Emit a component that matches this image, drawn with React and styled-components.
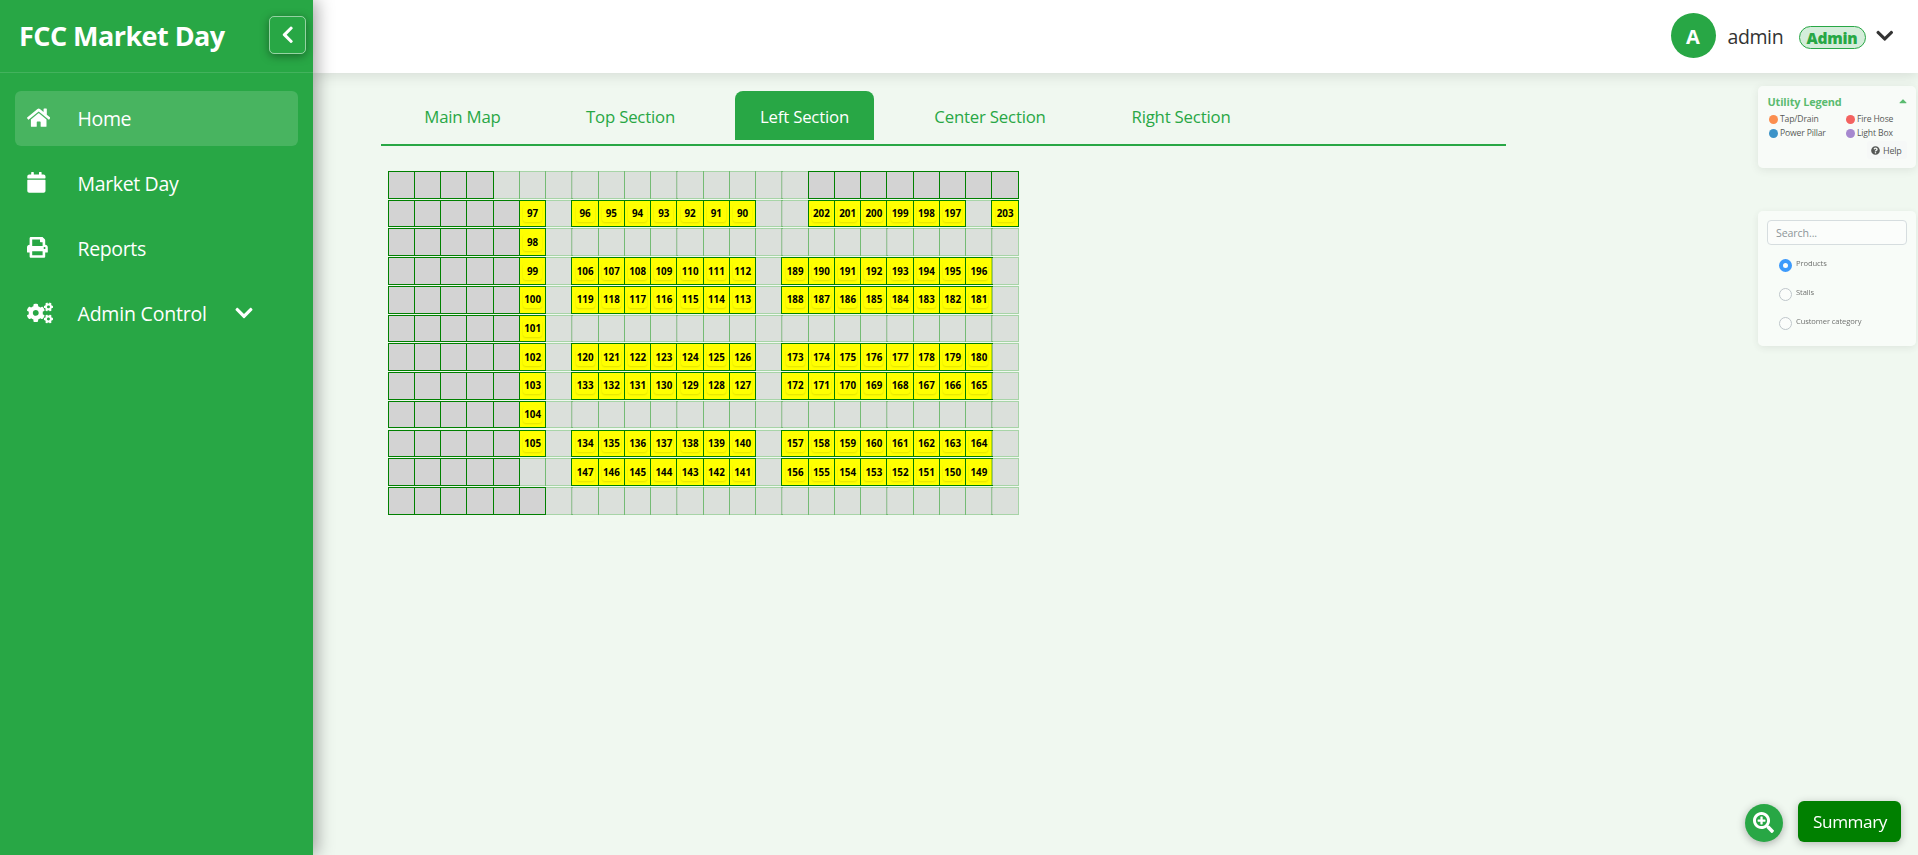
import React from 'react';
import styled, { createGlobalStyle, css } from 'styled-components';
import {
  FaHome,
  FaCalendar,
  FaPrint,
  FaCogs,
  FaChevronDown,
  FaChevronLeft,
  FaCaretUp,
  FaQuestionCircle,
  FaSearchPlus,
} from 'react-icons/fa';

const GlobalStyle = createGlobalStyle`
  *, *::before, *::after { box-sizing: border-box; }
  body {
    margin: 0;
    background: #f0f8f0;
    font-family: 'Segoe UI', 'Open Sans', 'Noto Sans', sans-serif;
    overflow: hidden;
  }
  button, input { font-family: inherit; }
`;

const Shell = styled.div`
  display: grid;
  grid-template-columns: 313px 1fr;
  height: 100vh;
  min-height: 855px;
`;

const Sidebar = styled.aside`
  position: relative;
  z-index: 3;
  background: #28a745;
  color: #fff;
  box-shadow: 4px 0 16px rgba(0, 0, 0, 0.34);
`;

const Brand = styled.div`
  display: flex;
  align-items: center;
  justify-content: space-between;
  height: 73px;
  padding: 0 7px 2px 19px;
  border-bottom: 1px solid rgba(255, 255, 255, 0.13);
`;

const BrandName = styled.h1`
  margin: 0;
  padding-top: 2px;
  font-size: 27px;
  line-height: 36px;
  font-weight: 700;
  letter-spacing: -0.55px;
  white-space: nowrap;
`;

const CollapseButton = styled.button`
  display: flex;
  align-items: center;
  justify-content: center;
  width: 37px;
  height: 38px;
  padding: 0 0 1px;
  color: #fff;
  font-size: 19.5px;
  background: transparent;
  border: 1px solid rgba(255, 255, 255, 0.5);
  border-radius: 5px;
  box-shadow: 0 2px 10px rgba(0, 0, 0, 0.38);
`;

const Nav = styled.nav`
  display: flex;
  flex-direction: column;
  gap: 10px;
  padding: 18px 15px;
`;

const NavItem = styled.a`
  display: flex;
  align-items: center;
  height: 55px;
  padding-left: 12px;
  border-radius: 6px;
  background: ${(p) => (p.$active ? 'rgba(255, 255, 255, 0.15)' : 'transparent')};

  > svg:last-child:not(:first-child) {
    margin: 0 0 2px 27px;
    font-size: 20px;
  }
`;

const NavIcon = styled.span`
  display: flex;
  width: 50.5px;
  padding-bottom: 2px;
  font-size: ${(p) => p.$size || 20.8}px;

  svg {
    flex: none;
    margin-left: ${(p) => p.$shift || 0}px;
  }
`;

const NavLabel = styled.span`
  font-size: 19.5px;
  line-height: 28px;
  letter-spacing: ${(p) => p.$spacing || '-0.35px'};
`;

const Main = styled.main`
  display: flex;
  flex-direction: column;
  min-width: 0;
`;

const Header = styled.header`
  position: relative;
  z-index: 1;
  display: flex;
  align-items: center;
  justify-content: flex-end;
  flex: none;
  height: 73px;
  padding: 0 24px 2px 0;
  background: #fff;
  color: #333;
  box-shadow: 0 2px 14px rgba(0, 0, 0, 0.12);

  > svg {
    margin: 0 0 0 9px;
    font-size: 19.5px;
  }
`;

const Avatar = styled.div`
  width: 45px;
  height: 45px;
  margin-right: 12px;
  border-radius: 50%;
  background: #28a745;
  color: #fff;
  font-size: 20px;
  font-weight: 700;
  line-height: 47px;
  text-align: center;
`;

const UserName = styled.span`
  width: 71px;
  font-size: 19.5px;
  line-height: 28px;
  letter-spacing: -0.4px;
  padding-top: 3px;
`;

const RoleBadge = styled.span`
  width: 67px;
  height: 23px;
  margin-top: 4px;
  border: 1px solid #28a745;
  border-radius: 12px;
  background: #d4edda;
  color: #28a745;
  font-size: 15.5px;
  font-weight: 800;
  line-height: 22px;
  letter-spacing: -0.25px;
  text-align: center;
`;

const Content = styled.div`
  display: flex;
  flex: 1;
  justify-content: space-between;
`;

const MapArea = styled.section`
  width: 1125px;
  margin-left: 68px;
`;

const Tabs = styled.div`
  display: flex;
  gap: 36px;
  height: 73px;
  padding: 18px 0 0 18px;
  border-bottom: 2px solid #28a745;
`;

const Tab = styled.button`
  width: ${(p) => p.$width}px;
  height: 49px;
  padding: 1px 0 0;
  border: 0;
  border-radius: 8px 8px 0 0;
  background: ${(p) => (p.$active ? '#28a745' : 'transparent')};
  color: ${(p) => (p.$active ? '#fff' : '#28a745')};
  font-size: 16.8px;
  letter-spacing: -0.2px;
  text-align: center;
  white-space: nowrap;
`;

const StallMap = styled.div`
  display: flex;
  flex-direction: column;
  gap: 1.15px;
  padding: 25px 0 0 6.7px;
`;

const StallRow = styled.div`
  display: flex;
  height: 27.6px;
`;

const cellKinds = {
  blocked: css`
    background: #d3d3d3;
    border-color: #008000;
  `,
  aisle: css`
    background: rgba(210, 214, 209, 0.7);
    background-clip: padding-box;
    border-color: rgba(0, 128, 0, 0.3);
  `,
  stall: css`
    background: #ffff00;
    border-color: #008000;
  `,
};

const Cell = styled.div`
  display: flex;
  flex: none;
  align-items: center;
  justify-content: center;
  width: 27.35px;
  margin-right: -1.1px;
  border: 1px solid;
  ${(p) => cellKinds[p.$kind]}
`;

const StallNumber = styled.span`
  min-width: 19px;
  height: 17px;
  border-radius: 3px;
  box-shadow: 0 1px 2px rgba(0, 0, 0, 0.12);
  color: #000;
  font-size: 9.8px;
  font-weight: 700;
  line-height: 17px;
  text-align: center;
`;

const SidePanels = styled.aside`
  display: flex;
  flex-direction: column;
  gap: 43px;
  width: 160px;
  padding: 13px 2px 0 0;
`;

const Panel = styled.section`
  height: ${(p) => p.$height}px;
  padding: 9px 9px 9px 10px;
  border-radius: 5px;
  background: rgba(255, 255, 255, 0.7);
  box-shadow: 0 2px 8px rgba(0, 0, 0, 0.1);
  opacity: 0.75;
  position: relative;
  z-index: 2;
`;

const LegendTitle = styled.div`
  display: flex;
  justify-content: space-between;
  height: 17px;
  margin-left: -0.6px;
  color: #28a745;
  font-size: 10.9px;
  font-weight: 700;
  line-height: 14px;
  letter-spacing: -0.12px;

  svg {
    margin-right: -2px;
    font-size: 12px;
  }
`;

const LegendGrid = styled.div`
  display: grid;
  grid-template-columns: 77px 1fr;
  padding-left: 1px;
`;

const LegendItem = styled.div`
  display: flex;
  align-items: center;
  gap: 2px;
  height: 14px;
  color: #222;
  font-size: 8.6px;
  line-height: 14px;
  letter-spacing: ${(p) => p.$spacing || '-0.15px'};
  white-space: nowrap;

  &::before {
    content: '';
    width: 9px;
    height: 9px;
    border-radius: 50%;
    background: ${(p) => p.$color};
  }
`;

const HelpButton = styled.button`
  display: flex;
  align-items: center;
  gap: 3px;
  width: 40px;
  height: 18px;
  margin: 1px 0 0 auto;
  padding: 0 4px;
  border: 0;
  border-radius: 3px;
  background: #f8f9fa;
  color: #222;
  font-size: 9px;
  letter-spacing: -0.2px;

  svg {
    flex: none;
  }
`;

const SearchInput = styled.input`
  display: block;
  width: 140px;
  height: 25px;
  margin-left: -1px;
  padding: 0 8px;
  border: 1px solid #ced4da;
  border-radius: 4px;
  background: #fff;
  font-size: 10.6px;
  letter-spacing: -0.1px;

  &::placeholder {
    color: #6c757d;
  }
`;

const Options = styled.div`
  display: flex;
  flex-direction: column;
  gap: 16px;
  padding: 14px 0 0 11px;
`;

const Option = styled.label`
  display: flex;
  gap: 4px;
  height: 13px;
  color: #444;
  font-size: 7.6px;
  line-height: 8px;
  white-space: nowrap;
  letter-spacing: -0.1px;
`;

const Radio = styled.input.attrs({ type: 'radio' })`
  appearance: none;
  flex: none;
  width: 13px;
  height: 13px;
  margin: 0;
  border: ${(p) => (p.checked ? '4px solid #007bff' : '1px solid #adb5bd')};
  border-radius: 50%;
  background: #fff;
`;

const FloatingActions = styled.div`
  position: fixed;
  right: 17px;
  bottom: 13px;
  display: flex;
  align-items: flex-end;
  gap: 15px;
`;

const ZoomButton = styled.button`
  display: flex;
  align-items: center;
  justify-content: center;
  width: 38px;
  height: 38px;
  padding: 0 1px 2px 0;
  border: 0;
  border-radius: 50%;
  background: #28a745;
  color: #fff;
  font-size: 21px;
  box-shadow: 0 2px 8px rgba(0, 0, 0, 0.3);
`;

const SummaryButton = styled.button`
  width: 103px;
  height: 41px;
  padding: 0 0 1px 1px;
  border: 0;
  border-radius: 6px;
  background: #008000;
  color: #fff;
  font-size: 17.2px;
  letter-spacing: -0.45px;
  box-shadow: 0 2px 8px rgba(0, 0, 0, 0.25);
`;

const tabs = [
  { label: 'Main Map', width: 127 },
  { label: 'Top Section', width: 137 },
  { label: 'Left Section', width: 139, active: true },
  { label: 'Center Section', width: 160 },
  { label: 'Right Section', width: 150 },
];

const blocked = (n) => Array(n).fill('blocked');
const aisle = (n) => Array(n).fill('aisle');
const range = (from, to) => {
  const step = from < to ? 1 : -1;
  return Array.from({ length: Math.abs(to - from) + 1 }, (_, i) => from + i * step);
};

const rows = [
  [...blocked(4), ...aisle(12), ...blocked(8)],
  [...blocked(5), 97, ...aisle(1), ...range(96, 90), ...aisle(2), ...range(202, 197), ...aisle(1), 203],
  [...blocked(5), 98, ...aisle(18)],
  [...blocked(5), 99, ...aisle(1), ...range(106, 112), ...aisle(1), ...range(189, 196), ...aisle(1)],
  [...blocked(5), 100, ...aisle(1), ...range(119, 113), ...aisle(1), ...range(188, 181), ...aisle(1)],
  [...blocked(5), 101, ...aisle(18)],
  [...blocked(5), 102, ...aisle(1), ...range(120, 126), ...aisle(1), ...range(173, 180), ...aisle(1)],
  [...blocked(5), 103, ...aisle(1), ...range(133, 127), ...aisle(1), ...range(172, 165), ...aisle(1)],
  [...blocked(5), 104, ...aisle(18)],
  [...blocked(5), 105, ...aisle(1), ...range(134, 140), ...aisle(1), ...range(157, 164), ...aisle(1)],
  [...blocked(5), ...aisle(2), ...range(147, 141), ...aisle(1), ...range(156, 149), ...aisle(1)],
  [...blocked(6), ...aisle(18)],
];

export default function App() {
  return (
    <>
      <GlobalStyle />
      <Shell>
        <Sidebar>
          <Brand>
            <BrandName>FCC Market Day</BrandName>
            <CollapseButton aria-label="Collapse menu">
              <FaChevronLeft />
            </CollapseButton>
          </Brand>
          <Nav>
            <NavItem $active>
              <NavIcon $size={23.4}><FaHome /></NavIcon>
              <NavLabel>Home</NavLabel>
            </NavItem>
            <NavItem>
              <NavIcon $shift={-1.3}><FaCalendar /></NavIcon>
              <NavLabel>Market Day</NavLabel>
            </NavItem>
            <NavItem>
              <NavIcon><FaPrint /></NavIcon>
              <NavLabel>Reports</NavLabel>
            </NavItem>
            <NavItem>
              <NavIcon $size={26}><FaCogs /></NavIcon>
              <NavLabel $spacing="-0.2px">Admin Control</NavLabel>
              <FaChevronDown />
            </NavItem>
          </Nav>
        </Sidebar>
        <Main>
          <Header>
            <Avatar>A</Avatar>
            <UserName>admin</UserName>
            <RoleBadge>Admin</RoleBadge>
            <FaChevronDown />
          </Header>
          <Content>
            <MapArea>
              <Tabs>
                {tabs.map((t) => (
                  <Tab key={t.label} $width={t.width} $active={t.active}>
                    {t.label}
                  </Tab>
                ))}
              </Tabs>
              <StallMap>
                {rows.map((row, r) => (
                  <StallRow key={r}>
                    {row.map((cell, c) =>
                      typeof cell === 'number' ? (
                        <Cell key={c} $kind="stall">
                          <StallNumber>{cell}</StallNumber>
                        </Cell>
                      ) : (
                        <Cell key={c} $kind={cell} />
                      )
                    )}
                  </StallRow>
                ))}
              </StallMap>
            </MapArea>
            <SidePanels>
              <Panel $height={82}>
                <LegendTitle>
                  Utility Legend
                  <FaCaretUp />
                </LegendTitle>
                <LegendGrid>
                  <LegendItem $color="#ff6b1a">Tap/Drain</LegendItem>
                  <LegendItem $color="#f53030">Fire Hose</LegendItem>
                  <LegendItem $color="#0072bb">Power Pillar</LegendItem>
                  <LegendItem $color="#8e63c4">Light Box</LegendItem>
                </LegendGrid>
                <HelpButton>
                  <FaQuestionCircle />
                  Help
                </HelpButton>
              </Panel>
              <Panel $height={135}>
                <SearchInput placeholder="Search..." />
                <Options>
                  <Option><Radio name="kind" checked readOnly />Products</Option>
                  <Option><Radio name="kind" checked={false} readOnly />Stalls</Option>
                  <Option><Radio name="kind" checked={false} readOnly />Customer category</Option>
                </Options>
              </Panel>
            </SidePanels>
          </Content>
        </Main>
      </Shell>
      <FloatingActions>
        <ZoomButton aria-label="Zoom in">
          <FaSearchPlus />
        </ZoomButton>
        <SummaryButton>Summary</SummaryButton>
      </FloatingActions>
    </>
  );
}
